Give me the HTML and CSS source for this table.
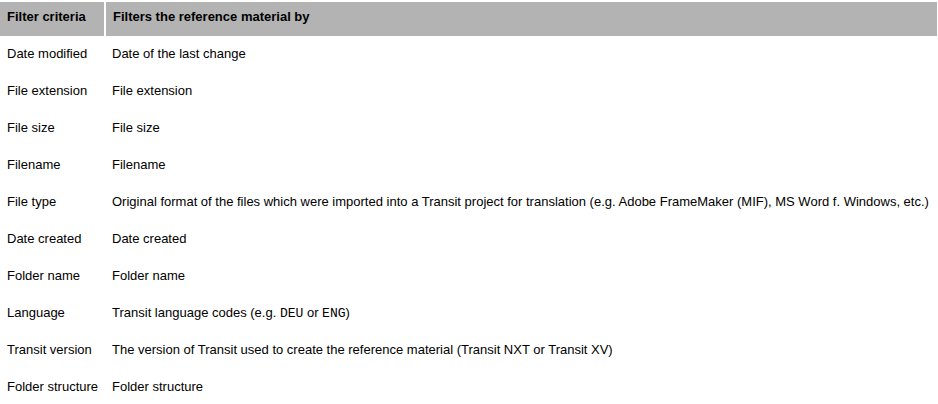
FILE: index.html
```html
<!DOCTYPE html>
<html>
<head>
<meta charset="utf-8">
<link rel="stylesheet" href="styles.css">
</head>
<body>
<div class="table">
  <div class="th">Filter criteria</div>
  <div class="th">Filters the reference material by</div>

  <div class="td">Date modified</div><div class="td">Date of the last change</div>
  <div class="td">File extension</div><div class="td">File extension</div>
  <div class="td">File size</div><div class="td">File size</div>
  <div class="td">Filename</div><div class="td">Filename</div>
  <div class="td">File type</div><div class="td">Original format of the files which were imported into a Transit project for translation (e.g. Adobe FrameMaker (MIF), MS Word f. Windows, etc.)</div>
  <div class="td">Date created</div><div class="td">Date created</div>
  <div class="td">Folder name</div><div class="td">Folder name</div>
  <div class="td">Language</div><div class="td">Transit language codes (e.g. <span class="code">DEU</span> or <span class="code">ENG</span>)</div>
  <div class="td">Transit version</div><div class="td">The version of Transit used to create the reference material (Transit NXT or Transit XV)</div>
  <div class="td">Folder structure</div><div class="td">Folder structure</div>
</div>
</body>
</html>
```
FILE: styles.css
```css
html, body {
  margin: 0;
  padding: 0;
  background: #fff;
}
body {
  font-family: "Liberation Sans", Arial, sans-serif;
  font-size: 13px;
  line-height: 15px;
  color: #000;
}
.table {
  display: grid;
  grid-template-columns: 104px 831px;
  column-gap: 2px;
  padding-top: 2px;
}
.th {
  background: #b3b3b3;
  font-weight: bold;
  height: 34px;
  box-sizing: border-box;
  padding: 7px 6px 0 7px;
  white-space: nowrap;
}
.td {
  height: 37px;
  box-sizing: border-box;
  padding: 10px 6px 0 7px;
  white-space: nowrap;
}
.td:nth-child(even) {
  padding-left: 6px;
}
.code {
  font-family: "Liberation Mono", "Courier New", monospace;
  font-size: 13px;
}
```
